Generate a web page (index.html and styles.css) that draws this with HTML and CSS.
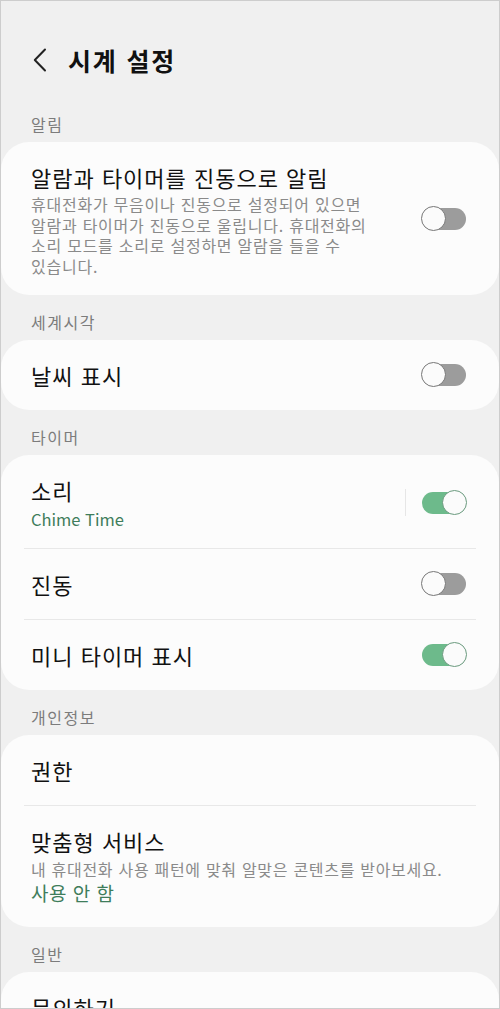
FILE: index.html
```html
<!DOCTYPE html>
<html lang="ko">
<head>
    <meta charset="UTF-8">
    <meta name="viewport" content="width=device-width, initial-scale=1.0">
    <title>시계 설정</title>
    <link rel="stylesheet" href="styles.css">
</head>
<body>
    <div class="screen">
        <div class="header">
            <svg class="back" width="14" height="24" viewBox="0 0 14 24">
                <path d="M12 1.5 L1.8 12 L12 22.5" fill="none" stroke="#222" stroke-width="2" stroke-linecap="round" stroke-linejoin="round"/>
            </svg>
            <h1 class="title">시계 설정</h1>
        </div>

        <div class="section-label">알림</div>
        <div class="card">
            <div class="row row-desc">
                <div class="row-text">
                    <div class="row-title">알람과 타이머를 진동으로 알림</div>
                    <div class="row-desc-text">휴대전화가 무음이나 진동으로 설정되어 있으면 알람과 타이머가 진동으로 울립니다. 휴대전화의 소리 모드를 소리로 설정하면 알람을 들을 수 있습니다.</div>
                </div>
                <span class="switch"></span>
            </div>
        </div>

        <div class="section-label">세계시각</div>
        <div class="card">
            <div class="row">
                <div class="row-text">
                    <div class="row-title">날씨 표시</div>
                </div>
                <span class="switch"></span>
            </div>
        </div>

        <div class="section-label">타이머</div>
        <div class="card">
            <div class="row row-sub">
                <div class="row-text">
                    <div class="row-title">소리</div>
                    <div class="row-value">Chime Time</div>
                </div>
                <span class="vsep"></span>
                <span class="switch on"></span>
            </div>
            <div class="divider"></div>
            <div class="row">
                <div class="row-text">
                    <div class="row-title">진동</div>
                </div>
                <span class="switch"></span>
            </div>
            <div class="divider"></div>
            <div class="row">
                <div class="row-text">
                    <div class="row-title">미니 타이머 표시</div>
                </div>
                <span class="switch on"></span>
            </div>
        </div>

        <div class="section-label">개인정보</div>
        <div class="card">
            <div class="row">
                <div class="row-text">
                    <div class="row-title">권한</div>
                </div>
            </div>
            <div class="divider"></div>
            <div class="row row-service">
                <div class="row-text">
                    <div class="row-title">맞춤형 서비스</div>
                    <div class="row-small">내 휴대전화 사용 패턴에 맞춰 알맞은 콘텐츠를 받아보세요.</div>
                    <div class="row-status">사용 안 함</div>
                </div>
            </div>
        </div>

        <div class="section-label">일반</div>
        <div class="card">
            <div class="row">
                <div class="row-text">
                    <div class="row-title">문의하기</div>
                </div>
            </div>
        </div>
    </div>
</body>
</html>
```

FILE: styles.css
```css
body {
    margin: 0;
    background-color: #f0f0f0;
    font-family: "Noto Sans CJK KR", "Noto Sans", sans-serif;
    color: #111;
    word-break: keep-all;
}

.screen {
    height: 1009px;
    box-sizing: border-box;
    border: 1px solid #cdcdcd;
    overflow: hidden;
    background-color: #f0f0f0;
}

.header {
    display: flex;
    align-items: center;
    gap: 21px;
    padding: 42px 32px 20px;
    height: 34px;
}

.back {
    display: block;
}

.title {
    margin: 0;
    font-size: 25px;
    font-weight: bold;
    line-height: 34px;
    letter-spacing: 1.8px;
}

.section-label {
    padding: 17px 30px 8px;
    font-size: 16px;
    line-height: 20px;
    letter-spacing: 1.5px;
    color: #7c7c7c;
}

.card {
    background-color: #fcfcfc;
    border-radius: 28px;
}

.row {
    display: flex;
    align-items: center;
    padding: 20px 32px 20px 30px;
}

.row-text {
    flex: 1;
}

.row-title {
    font-size: 22px;
    line-height: 30px;
    letter-spacing: 1px;
}

.row-desc {
    padding-bottom: 19px;
}

.row-desc .row-text {
    padding-right: 50px;
}

.row-desc-text {
    margin-top: 2px;
    font-size: 16px;
    line-height: 20.6px;
    letter-spacing: 0.75px;
    color: #8a8a8a;
}

.row-sub {
    padding-bottom: 18px;
}

.row-value {
    margin-top: 3px;
    font-size: 16.5px;
    line-height: 22px;
    color: #3f7d5b;
}

.row-service {
    padding-bottom: 21px;
}

.row-small {
    margin-top: 2px;
    font-size: 16px;
    line-height: 22px;
    letter-spacing: 0.7px;
    color: #8a8a8a;
}

.row-status {
    font-size: 19px;
    line-height: 26px;
    letter-spacing: 0.5px;
    color: #3f7d5b;
}

.divider {
    height: 1px;
    margin: 0 23px;
    background-color: #e8e8e8;
}

.vsep {
    width: 1px;
    height: 27px;
    margin-right: 15px;
    background-color: #e6e6e6;
}

.switch {
    position: relative;
    width: 46px;
    height: 26px;
    flex: none;
}

.switch::before {
    content: "";
    position: absolute;
    left: 1px;
    right: 1px;
    top: 2px;
    bottom: 2px;
    border-radius: 11px;
    background-color: #9c9c9c;
}

.switch::after {
    content: "";
    position: absolute;
    left: 0;
    top: 0;
    width: 23px;
    height: 23px;
    border: 1.5px solid #777;
    border-radius: 50%;
    background-color: #fbfbfb;
}

.switch.on::before {
    background-color: #6dba8b;
}

.switch.on::after {
    left: auto;
    right: 0;
    border-color: #6a9a7e;
}
```
